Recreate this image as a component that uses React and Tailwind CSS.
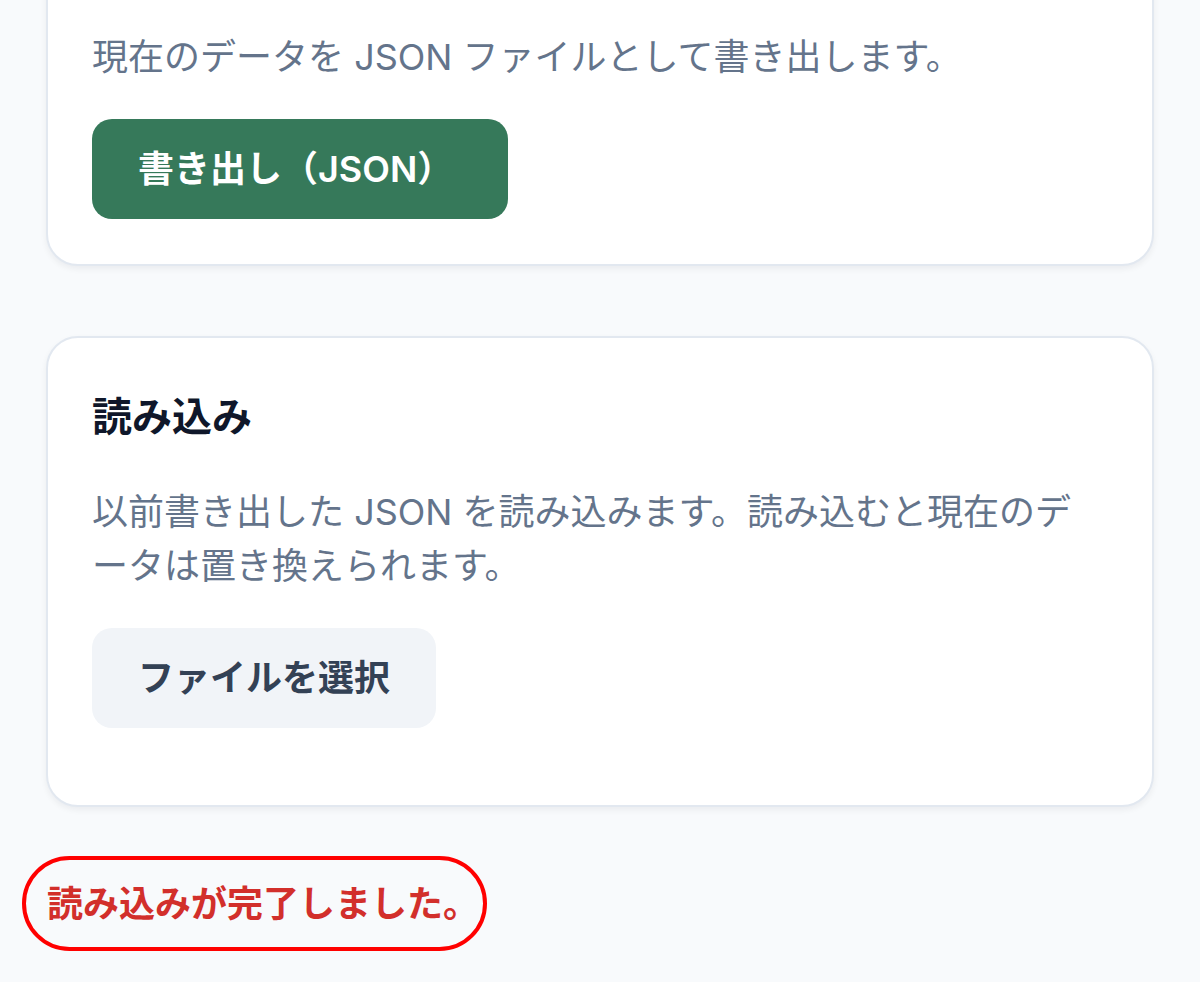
import React from 'react';

const cardClass =
  'rounded-[32px] border-2 border-[#e2e8f0] bg-white px-[44px] shadow-[0_3px_6px_rgba(15,23,42,0.06)]';

const App = () => {
  return (
    <div className="min-h-screen overflow-hidden bg-[#f8fafc] px-[46px] font-[Inter,'Noto_Sans_CJK_JP',sans-serif]">
      {/* Export card (its top is scrolled out of view) */}
      <section className={`${cardClass} -mt-[119px] pt-[147px] pb-[45px]`}>
        <p className="text-[36px] leading-[54px] text-[#64748b]">
          現在のデータを JSON ファイルとして書き出します。
        </p>
        <button className="mt-[35px] h-[100px] rounded-[20px] bg-[#36795a] pl-[46px] pr-[55px] text-[36px] leading-[54px] font-semibold text-white">
          書き出し（JSON）
        </button>
      </section>

      {/* Import card */}
      <section className={`${cardClass} mt-[70px] pt-[51px] pb-[77px]`}>
        <h2 className="text-[40px] leading-[56px] font-bold text-[#0f172a]">読み込み</h2>
        <p className="mt-[40px] text-[36px] leading-[54px] text-[#64748b]">
          以前書き出した JSON を読み込みます。読み込むと現在のデ
          <br />
          ータは置き換えられます。
        </p>
        <button className="mt-[35px] h-[100px] rounded-[20px] bg-[#f1f4f8] px-[46px] text-[36px] leading-[54px] font-semibold text-[#334155]">
          ファイルを選択
        </button>
      </section>

      {/* Status message */}
      <div className="mt-[49px] -ml-[24px] inline-block rounded-full border-4 border-[#ff0000] pl-[21px] pr-[4px] pt-[17px] pb-[16px]">
        <p className="text-[36px] leading-[54px] font-semibold text-[#d22f2b]">読み込みが完了しました。</p>
      </div>
    </div>
  );
};

export default App;
